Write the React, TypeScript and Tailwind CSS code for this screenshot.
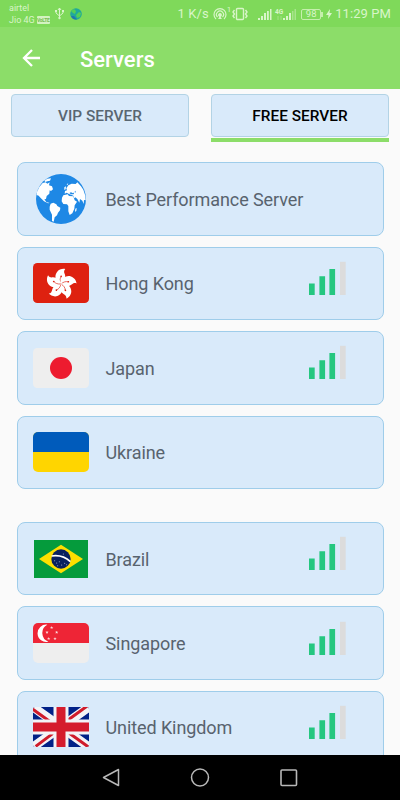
import type { ReactNode } from "react";

const Globe = () => (
  <svg viewBox="0 0 150 150" className="h-[50px] w-[50px]">
    <circle cx="75" cy="75" r="75" fill="#1e88e5" />
    <g fill="#fff">
      <path d="M3 54 10 39 20 27 29 25 34 29 41 25 39 34 48 37 51 46 45 51 41 49 40 59 32 66 30 75 25 76 31 84 41 87 36 88 24 82 14 72 8 65 2 63Z" />
      <path d="M25 20 34 14 45 13 42 20 34 22 28 24Z" />
      <path d="M44 89 52 86 61 91 64 96 73 101 72 109 66 116 63 124 56 130 53 143 48 141 48 122 41 107 41 98Z" />
      <path d="M82 64 95 61 99 66 112 67 116 79 123 83 116 94 115 104 109 118 101 123 97 112 97 96 93 91 82 90 77 82 78 71Z" />
      <path d="M86 59 87 51 93 49 91 43 97 34 107 29 119 30 124 25 135 37 142 47 148 65 149 79 144 78 143 90 139 80 132 75 130 86 124 75 118 70 115 73 112 65 105 62 99 60 92 56Z" />
      <path d="M118 104 122 102 121 111 117 113Z" />
      <path d="M85 40 90 37 89 46 85 48ZM92 31 97 28 94 34Z" />
    </g>
    <path d="M100 57 105 55 111 58 115 55 113 61 105 61ZM116 52 119 50 118 58Z" fill="#1e88e5" />
  </svg>
);

const HongKong = () => (
  <svg viewBox="0 0 168 120" className="h-10 w-14">
    <rect width="168" height="120" rx="13" fill="#de2110" />
    {[6, 78, 150, 222, 294].map((angle) => (
      <g key={angle} transform={`translate(84 63) rotate(${angle})`}>
        <path d="M0 2C-18-7-23-22-16-34-11-43 0-47 8-46 4-41 5-36 8-31 14-19 10-6 0 2Z" fill="#fff" />
        <path d="M0 0C-5-9-5-16-2-22" fill="none" stroke="#de2110" strokeWidth="1.8" />
        <circle cx="-2" cy="-23" r="2.5" fill="#de2110" />
      </g>
    ))}
  </svg>
);

const Japan = () => (
  <svg viewBox="0 0 168 120" className="h-10 w-14">
    <rect width="168" height="120" rx="13" fill="#eee" />
    <circle cx="84" cy="60" r="33" fill="#ed1b2f" />
  </svg>
);

const Ukraine = () => (
  <div className="h-10 w-14 overflow-hidden rounded-[5px] bg-[#ffd500]">
    <div className="h-1/2 bg-[#005bbb]" />
  </div>
);

const Brazil = () => (
  <svg viewBox="0 0 162 114" className="h-[38px] w-[54px]">
    <rect width="162" height="114" fill="#059b3c" />
    <path d="M15 57 81 14 147 57 81 100Z" fill="#fedf00" />
    <circle cx="81" cy="57" r="29" fill="#08205f" />
    <path d="M53 48Q86 43 109 65" fill="none" stroke="#fff" strokeWidth="5" />
    <g fill="#b9c4dc">
      <circle cx="62" cy="62" r="1.5" />
      <circle cx="68" cy="69" r="1.5" />
      <circle cx="76" cy="65" r="1.5" />
      <circle cx="83" cy="75" r="1.5" />
      <circle cx="92" cy="70" r="1.5" />
      <circle cx="71" cy="77" r="1.5" />
      <circle cx="98" cy="74" r="1.5" />
      <circle cx="88" cy="42" r="1.5" />
    </g>
  </svg>
);

const Singapore = () => (
  <div className="h-10 w-14 overflow-hidden rounded-[5px] bg-[#eee]">
    <svg viewBox="0 0 168 60" className="h-5 w-14">
      <rect width="168" height="60" fill="#ee2536" />
      <path d="M43 5A26 26 0 1 0 46 56 28 28 0 0 1 43 5Z" fill="#fff" />
      <g fill="#fff" fillOpacity="0.85">
        {[[56, 14], [42, 28], [71, 28], [47, 47], [66, 47]].map(([x, y]) => (
          <path
            key={`${x}-${y}`}
            transform={`translate(${x} ${y})`}
            d="M0-5 1.3-1.6 5-1.6 2.1.7 3.1 4.2 0 2.1-3.1 4.2-2.1.7-5-1.6-1.3-1.6Z"
          />
        ))}
      </g>
    </svg>
  </div>
);

const UnitedKingdom = () => (
  <svg viewBox="0 0 168 120" className="h-10 w-14 rounded-[2px]">
    <rect width="168" height="120" fill="#012187" />
    <path d="M0 0 168 120M168 0 0 120" stroke="#f3f3f6" strokeWidth="27" />
    <path d="M-4 4 60 50M108 78 172 124M164-4 105 39M63 77 8 118" stroke="#cf1b2b" strokeWidth="9" />
    <path d="M84 0V120M0 60H168" stroke="#f3f3f6" strokeWidth="45" />
    <path d="M84 0V120M0 60H168" stroke="#d51c2d" strokeWidth="27" />
  </svg>
);

const Signal = () => (
  <svg viewBox="0 0 37 34" className="mb-[11px] ml-auto mr-[36.5px] h-[34px] w-[37px]">
    <path d="M0 22.5h5.7V34H0zM10.4 15.3h5.7V34h-5.7zM20.4 8h5.7v26h-5.7z" fill="#25c780" />
    <path d="M31 .8h5.7V34H31z" fill="#dcdcdc" />
  </svg>
);

interface ServerCardProps {
  name: string;
  icon: ReactNode;
  signal?: boolean;
}

const ServerCard = ({ name, icon, signal = false }: ServerCardProps) => (
  <li className="flex h-[73.4px] shrink-0 items-center rounded-[8px] border border-[#9fcdea] bg-[#d9eafa] pl-[15.5px]">
    <span className="flex w-14 justify-center">{icon}</span>
    <span className="ml-[16.5px] pt-px text-[18px] tracking-[-0.09px] text-[#58636e]">{name}</span>
    {signal && <Signal />}
  </li>
);

const StatusBar = () => (
  <div className="flex h-[27px] items-center bg-[#7fd95a] pl-[9px] pr-[9px] text-[#d9f5c9]">
    <div className="pt-px text-[9px] leading-[13px]">
      <div className="h-[12px]">airtel</div>
      <div className="flex h-[13px] items-center">
        Jio 4G
        <span className="ml-[2px] flex h-2 w-[13px] items-center justify-center rounded-[1px] bg-[#d3f2c0] text-[5px] font-bold leading-none tracking-[-0.3px] text-[#75bd55]">
          VoLTE
        </span>
      </div>
    </div>
    <svg viewBox="0 0 9 13" className="ml-[5px] h-[13px] w-[9px]" fill="none" stroke="currentColor">
      <path d="M4.5 1V11M1 4V6L4.5 9 8 6V4M3 3 4.5 1 6 3" />
      <circle cx="4.5" cy="11" r="1.2" fill="currentColor" stroke="none" />
      <path d="M0 4H2M7 4H9" strokeWidth="2" />
    </svg>
    <svg viewBox="0 0 12 12" className="ml-[6px] h-3 w-3">
      <circle cx="6" cy="6" r="5.8" fill="#20a99a" />
      <path d="M1 3 4 1 6 3 5 6 3 5ZM6 7 9 4 11 5 10 9 7 10Z" fill="#52cf57" />
      <path d="M1 8A5.5 5.5 0 0 0 7 11.5L4 8Z" fill="#2078ae" />
    </svg>
    <div className="ml-auto flex items-center pt-px">
      <span className="text-[13px] tracking-[0.1px]">1 K/s</span>
      <svg viewBox="0 0 14 14" className="ml-[4px] h-[14px] w-[14px]" fill="none" stroke="currentColor" strokeWidth="1.2">
        <path d="M3 12A6 6 0 1 1 11 12M4.5 10A3.5 3.5 0 1 1 9.5 10" />
        <circle cx="7" cy="8" r="1.3" fill="currentColor" />
        <path d="M5 12 7 9 9 12Z" fill="currentColor" stroke="none" />
      </svg>
      <span className="-mt-2 text-[8px] leading-none">1</span>
      <svg viewBox="0 0 16 14" className="ml-px h-[14px] w-4" fill="none" stroke="currentColor">
        <rect x="4.5" y="1.5" width="7" height="11" rx="1" strokeWidth="1.4" />
        <path d="M2.5 3 1 5 2.5 7 1 9 2.5 11M13.5 3 15 5 13.5 7 15 9 13.5 11" strokeWidth="1.4" />
      </svg>
      <svg viewBox="0 0 40 14" className="ml-[10px] h-[14px] w-10" fill="currentColor">
        <path d="M0 11h2v2H0zM3 9h2v4H3zM6 6h2v7H6zM9 4h1.8v9H9zM12 2h1.5v11H12z" />
        <path d="M25 11h2v2h-2zM28 9h2v4h-2zM31 6h2v7h-2z" />
        <path d="M34 4h1.5v9H34zM36.5 2h1.5v11h-1.5z" opacity="0.45" />
        <path d="M20 9v4M23 9v4" stroke="currentColor" opacity="0.4" />
        <text x="17" y="6.5" fontSize="6.5" fontWeight="bold">4G</text>
      </svg>
      <span className="ml-[3px] flex h-[11px] w-5 items-center justify-center rounded-[2px] border border-[#c5efac] text-[9.5px] leading-none">
        98
      </span>
      <span className="h-[5px] w-[2px] bg-[#c5efac]" />
      <svg viewBox="0 0 6 10" className="ml-[3px] h-[10px] w-[6px]" fill="currentColor">
        <path d="M4 0 0 6H2.5L2 10 6 4H3.5Z" />
      </svg>
      <span className="ml-[3px] text-[13px] tracking-[0.08px]">11:29 PM</span>
    </div>
  </div>
);

const Header = () => (
  <header className="flex h-[62px] items-center bg-[#8cdd69] text-white">
    <svg viewBox="0 0 18 18" className="ml-[22px] h-[18px] w-[18px]" fill="none" stroke="currentColor" strokeWidth="2.3">
      <path d="M18 9H2M10 1 2 9 10 17" />
    </svg>
    <h1 className="ml-10 pt-[2px] text-[22px] font-medium">Servers</h1>
  </header>
);

const Tabs = () => (
  <div className="flex justify-between px-[11px] pt-[5px] text-[15.4px] font-medium">
    <div className="w-[178px]">
      <div className="flex h-[43px] items-center justify-center rounded-[4px] border border-[#b3d3e5] bg-[#d9eafa] pt-[3px] text-[#596671]">
        VIP SERVER
      </div>
    </div>
    <div className="w-[178px]">
      <div className="flex h-[43px] items-center justify-center rounded-[4px] border border-[#b3d3e5] bg-[#d9eafa] pt-[3px] text-black">
        FREE SERVER
      </div>
      <div className="mt-px h-1 bg-[#8cdd69]" />
    </div>
  </div>
);

const NavBar = () => (
  <nav className="flex h-[45px] shrink-0 items-center justify-center gap-[70px] bg-black text-[#b8b8b8]">
    <svg viewBox="0 0 18 20" className="h-5 w-[18px]" fill="none" stroke="currentColor" strokeWidth="1.5" strokeLinejoin="round">
      <path d="M16.5 1.5V17.5L1.5 9.5Z" />
    </svg>
    <svg viewBox="0 0 20 20" className="h-5 w-5" fill="none" stroke="currentColor" strokeWidth="1.5">
      <circle cx="10" cy="9.5" r="8.5" />
    </svg>
    <svg viewBox="0 0 18 18" className="h-[18px] w-[18px]" fill="none" stroke="currentColor" strokeWidth="1.6">
      <rect x="1" y="1" width="15.5" height="15.5" rx="1" />
    </svg>
  </nav>
);

export default function App() {
  return (
    <div className="flex h-[800px] w-[400px] flex-col overflow-hidden bg-[#fafafa] font-['Roboto',sans-serif]">
      <StatusBar />
      <Header />
      <Tabs />
      <main className="mx-[16.5px] mt-[20.4px] flex min-h-0 flex-1 flex-col gap-[33px] overflow-hidden">
        <ul className="flex flex-col gap-[11px]">
          <ServerCard name="Best Performance Server" icon={<Globe />} />
          <ServerCard name="Hong Kong" icon={<HongKong />} signal />
          <ServerCard name="Japan" icon={<Japan />} signal />
          <ServerCard name="Ukraine" icon={<Ukraine />} />
        </ul>
        <ul className="flex flex-col gap-[11px]">
          <ServerCard name="Brazil" icon={<Brazil />} signal />
          <ServerCard name="Singapore" icon={<Singapore />} signal />
          <ServerCard name="United Kingdom" icon={<UnitedKingdom />} signal />
        </ul>
      </main>
      <NavBar />
    </div>
  );
}
